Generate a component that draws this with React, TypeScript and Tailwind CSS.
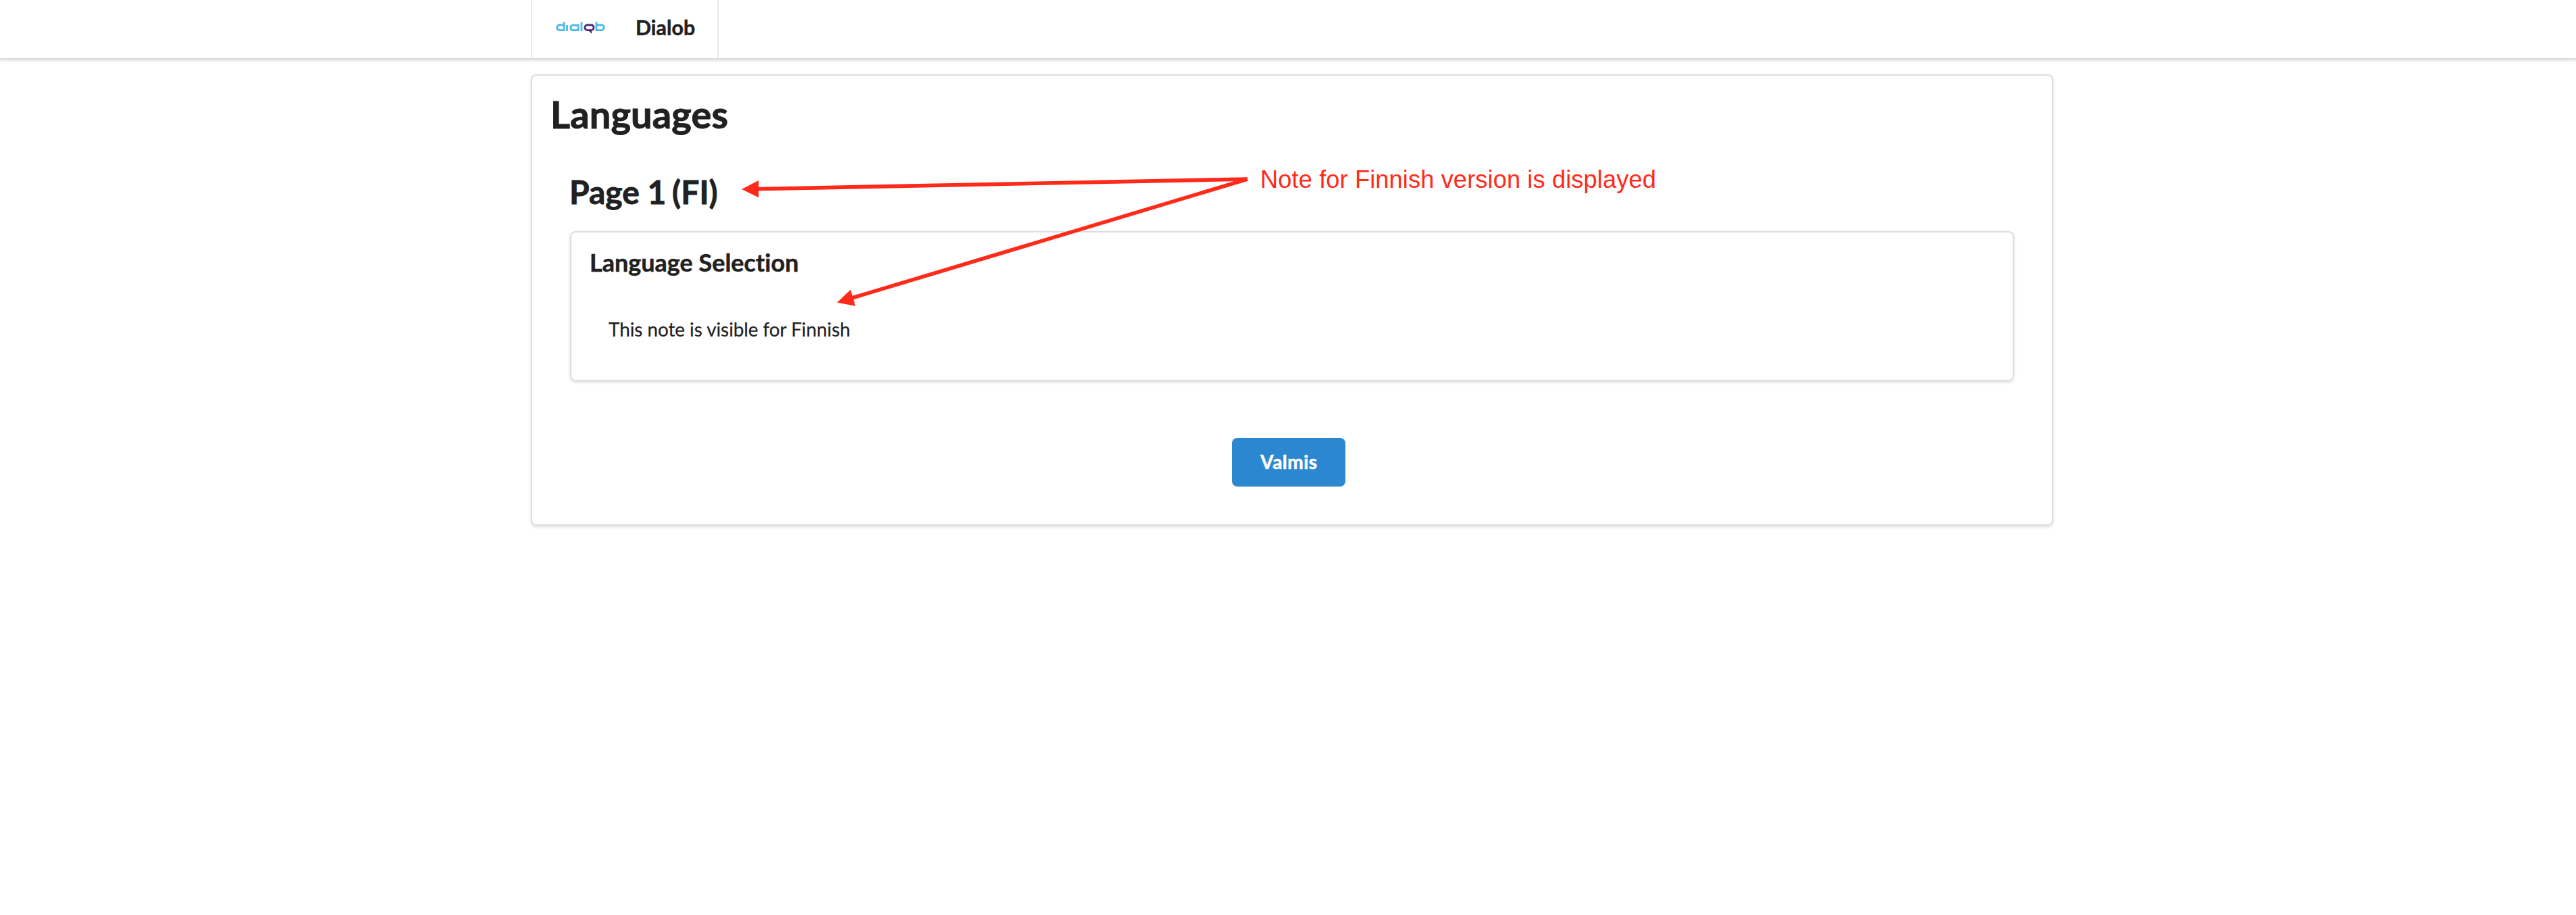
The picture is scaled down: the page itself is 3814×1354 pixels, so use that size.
import React from "react";

function DialobLogo() {
  return (
    <svg className="h-[24px] w-[76px]" viewBox="0 0 76 24" fill="none" strokeWidth="2.8">
      <g stroke="#4db8e8">
        <path d="M14.200 3.600v12h-7.700a4 4 0 0 1 0-7.600h7.700" />
        <path d="M18.500 8v9" />
        <path d="M35.200 17V8.300H27a3.700 3.700 0 0 0 0 7.300h8.200" />
        <path d="M40 3.600v13.400" />
        <path d="M62 3.600v12h8.500a4 4 0 0 0 0-7.600H62" />
      </g>
      <rect x="45" y="8" width="13" height="7.600" rx="3.500" stroke="#4a2a78" />
      <path d="M50 16h5v5z" fill="#4a2a78" />
    </svg>
  );
}

function Annotation() {
  return (
    <div className="pointer-events-none absolute inset-0">
      <svg className="absolute top-0 left-0 h-[600px] w-[1900px]" viewBox="0 0 1900 600" fill="#ff2a1a" stroke="none">
        <path d="M1847 265 1118 279.700" stroke="#ff2a1a" strokeWidth="5.600" />
        <path d="M1098 280 1123.300 267v25.300z" />
        <path d="M1847 265 1258 442" stroke="#ff2a1a" strokeWidth="5.600" />
        <path d="M1239.300 447.700 1259.300 428.700 1266.700 452.700z" />
      </svg>
      <p className="absolute top-[245px] left-[1866px] font-['Liberation_Sans',sans-serif] text-[36.25px] leading-[42px] tracking-[0.1px] whitespace-nowrap text-[#ff2a1a]">
        Note for Finnish version is displayed
      </p>
    </div>
  );
}

export default function App() {
  return (
    <div className="relative min-h-[1354px] bg-white font-[Lato,sans-serif] text-[28px] leading-[40px] text-[#212121] [font-variant-ligatures:none]">
      <header className="h-[88px] border-b-2 border-[#dddddd] shadow-[0_2px_4px_0_rgba(34,36,38,0.15)]">
        <div className="ml-[786px] flex h-full w-[278px] items-center border-x-2 border-[#e9e9e9] pb-[4px] pl-[33px]">
          <DialobLogo />
          <span className="ml-[44px] pb-[2px] text-[30.4px] font-bold [-webkit-text-stroke:0.5px]">Dialob</span>
        </div>
      </header>
      <main className="mt-[22px] ml-[786px] h-[668px] w-[2254px] rounded-[8px] border-2 border-[#dddddd] px-[28px] pt-[21px] shadow-[0_2px_4px_0_rgba(34,36,38,0.15)]">
        <h1 className="-ml-[1px] text-[56px] leading-[72px] font-bold tracking-[0.1px] [-webkit-text-stroke:0.9px]">Languages</h1>
        <section className="px-[28px] pt-[48px]">
          <h2 className="-ml-[1px] text-[48px] leading-[62px] font-bold [-webkit-text-stroke:0.8px]">
            Page 1 <span className="-ml-[3px]">(FI)</span>
          </h2>
          <div className="mt-[27px] h-[222px] rounded-[8px] border-2 border-[#dddddd] px-[28px] pt-[21px] shadow-[0_2px_4px_0_rgba(34,36,38,0.15)]">
            <h3 className="-ml-[1px] text-[36px] leading-[46px] font-bold [-webkit-text-stroke:0.5px]">Language Selection</h3>
            <p className="mt-[56px] pl-[27px] tracking-[-0.1px] [-webkit-text-stroke:0.2px]">This note is visible for Finnish</p>
          </div>
        </section>
        <button className="mt-[84px] ml-[1008px] flex h-[72px] w-[168px] items-center justify-center rounded-[8px] bg-[#2a87d0] pb-[3px] pl-[1px] font-bold tracking-[0.5px] text-white [-webkit-text-stroke:0.6px]">
          Valmis
        </button>
      </main>
      <Annotation />
    </div>
  );
}
